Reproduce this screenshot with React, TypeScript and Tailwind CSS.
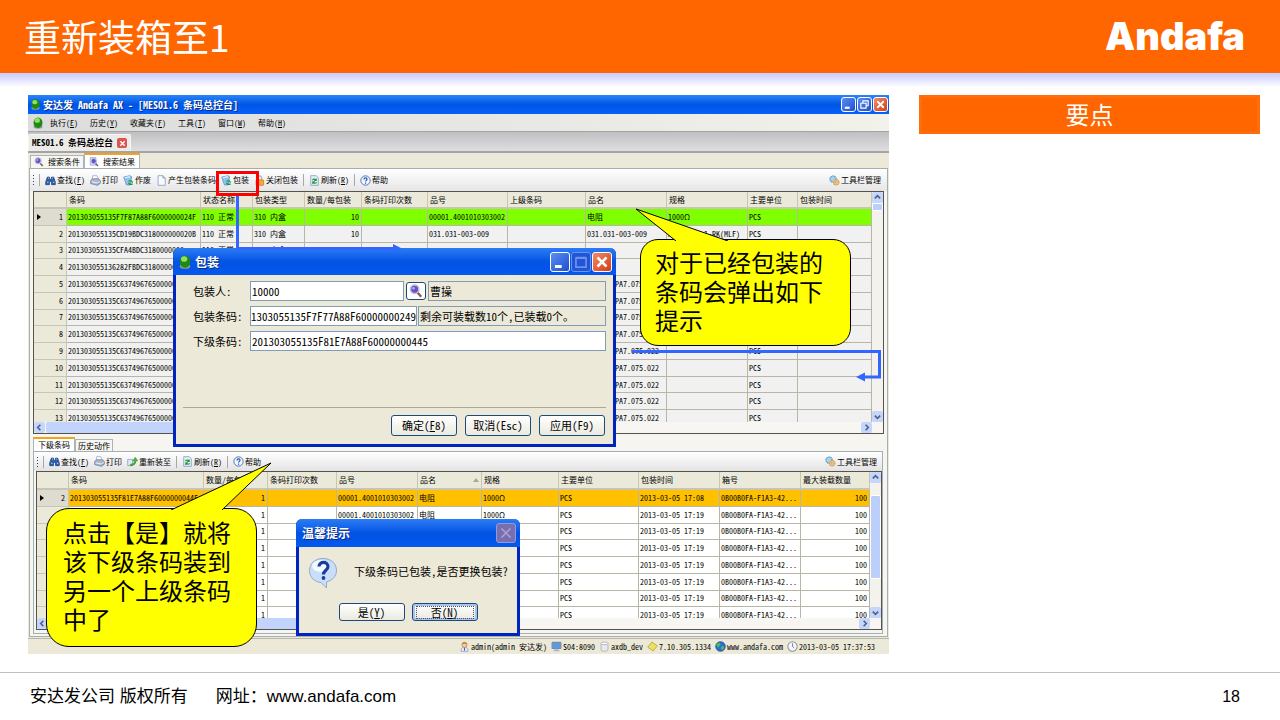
import React from "react";

type IconName =
  | "orb" | "search" | "result" | "find" | "print" | "recycle" | "page" | "lock"
  | "refresh" | "help" | "gears" | "repack" | "user" | "pc" | "db" | "tag" | "globe" | "clock";

const shapes: Record<IconName, React.ReactNode> = {
  orb: (
    <>
      <ellipse cx="8" cy="13" rx="6" ry="2.6" fill="#8a9a9a" />
      <ellipse cx="8" cy="7.500" rx="6" ry="7" fill="#1f8a12" />
      <ellipse cx="7" cy="4.6" rx="3.6" ry="3.2" fill="#8fe05a" />
    </>
  ),
  search: (
    <>
      <path d="M9.5 9.5l4.5 5" stroke="#8a5a4a" strokeWidth="2.6" />
      <circle cx="6.5" cy="6" r="4.8" fill="#6a4fd0" stroke="#b9bfd8" strokeWidth="1.8" />
      <circle cx="5.2" cy="4.8" r="1.5" fill="#b7a8f2" />
    </>
  ),
  result: (
    <>
      <path d="M2 1h9v12H2z" fill="#dfe7f6" stroke="#7f93bd" />
      <path d="M10.5 10.5l4 4" stroke="#6b5a80" strokeWidth="2.4" />
      <circle cx="7.5" cy="6.5" r="4.2" fill="#6a4fd0" stroke="#b9bfd8" strokeWidth="1.5" />
    </>
  ),
  find: (
    <>
      <path d="M3.5 3h3v3h3V3h3l2.5 7v4H9.500V9.500h-3V14H1v-4z" fill="#2b5fa8" stroke="#16407c" />
      <path d="M3 10.500h2M11.500 10.500h2M4.500 4.500h1M10.500 4.500h1" stroke="#cfe2fb" strokeWidth="1.600" />
    </>
  ),
  print: (
    <>
      <path d="M3 7l1-6h6l3 6z" fill="#fff" stroke="#8b9bb5" />
      <path d="M1 8l3-2.500h8l3 2.500v4l-4 3-10-2.500z" fill="#aeb9cb" stroke="#5f6d87" />
      <path d="M2.500 10l8.500 1.800 3-2.300" stroke="#f2f6fb" strokeWidth="1.300" fill="none" />
      <circle cx="12" cy="13" r="1.200" fill="#4da6e8" />
    </>
  ),
  recycle: (
    <>
      <path d="M1 3l9-2 2.500 1.500-2 12H5z" fill="#8fc4ee" stroke="#4c86bd" />
      <path d="M2.500 4l7.500-1.500" stroke="#e9f5ff" strokeWidth="1.800" />
      <path d="M8 8.500h4l2 2.500M14 13.500H9.500L8 11" fill="none" stroke="#1d9b4b" strokeWidth="2" />
    </>
  ),
  page: <path d="M3 1h7l3.500 3.500V15H3z M10 1v3.500h3.500" fill="#f7fbff" stroke="#6f8db9" />,
  lock: (
    <>
      <path d="M5 8V4.500a3 3 0 016 0V8" fill="none" stroke="#b9b9b9" strokeWidth="2" />
      <rect x="3" y="7" width="11" height="8" rx="1" fill="#f4a83a" stroke="#bd7417" />
    </>
  ),
  refresh: (
    <>
      <path d="M2.500 1h8l3 3v11h-11z" fill="#e6effa" stroke="#6f8db9" />
      <path d="M5 7.500c1-2 4-2 5 0M10.500 5v3h-3M11 10.500c-1 2-4 2-5 0M5.500 13v-3h3" fill="none" stroke="#1c9a30" strokeWidth="1.500" />
    </>
  ),
  help: (
    <>
      <circle cx="8" cy="8" r="6.800" fill="#f2f7ff" stroke="#3f6cb8" strokeWidth="1.300" />
      <path d="M5.800 6.400c0-3 4.500-2.800 4.500-.2 0 1.600-2.200 1.700-2.200 3.400M8.100 11v1.600" fill="none" stroke="#2453a8" strokeWidth="1.700" />
    </>
  ),
  gears: (
    <>
      <circle cx="6" cy="6" r="4.500" fill="#a9d3f0" stroke="#5fa0cf" strokeWidth="2" strokeDasharray="2 .8" />
      <circle cx="10.500" cy="10.500" r="4" fill="#f1d49b" stroke="#cf9c45" strokeWidth="1.800" strokeDasharray="2 .7" />
      <circle cx="10.500" cy="10.500" r="1.500" fill="#fff" stroke="#b4822f" />
    </>
  ),
  repack: (
    <>
      <path d="M1 5h7v9H1z" fill="#dce8f7" stroke="#7a93ba" />
      <path d="M5 12c4 0 6-2 6-5H8.500L12 2l3.500 5H13c0 5-3 7-8 7z" fill="#49bd2f" stroke="#247e14" strokeWidth=".8" />
    </>
  ),
  user: (
    <>
      <path d="M3 15c0-5 2-6 5-6s5 1 5 6z" fill="#e8edf6" stroke="#7f93bd" />
      <circle cx="8" cy="5.500" r="3.700" fill="#f6cf9f" stroke="#b57a35" />
      <path d="M4.300 5c0-4 7.400-4 7.400 0-2-1.500-5-1.500-7.400 0z" fill="#c9762a" />
      <path d="M8 10v4" stroke="#3a5fd0" strokeWidth="1.600" />
    </>
  ),
  pc: (
    <>
      <rect x="1.500" y="2" width="13" height="9" rx="1" fill="#5d9be0" stroke="#7a8ca8" strokeWidth="1.500" />
      <path d="M5 12h6l2 3H3z" fill="#a9b7cc" />
    </>
  ),
  db: (
    <>
      <path d="M3 3v10c0 2.500 10 2.500 10 0V3z" fill="#e9e9ee" stroke="#a0a0aa" />
      <ellipse cx="8" cy="3.500" rx="5" ry="2" fill="#fff" stroke="#a0a0aa" />
    </>
  ),
  tag: <path d="M7 1.500L15 7l-6 7.500L1 9z" fill="#eae25c" stroke="#a79c21" />,
  globe: (
    <>
      <circle cx="8" cy="8" r="7" fill="#2a6fd0" stroke="#1c4688" />
      <path d="M3 4c3-2 5-1 5 1s-3 2-3 4-3-1-3-5zM9 8c3-1 5 0 4 2s-3 4-4 2 0-2 0-4z" fill="#4fbf55" />
    </>
  ),
  clock: (
    <>
      <circle cx="8" cy="8" r="6.800" fill="#f4f6fa" stroke="#8d93a3" strokeWidth="1.500" />
      <path d="M8 3.500V8l2.500 2" fill="none" stroke="#5d6a86" strokeWidth="1.200" />
    </>
  ),
};

function Icon({ name, className = "size-[11px]" }: { name: IconName; className?: string }) {
  return (
    <svg viewBox="0 0 16 16" className={`shrink-0 ${className}`} aria-hidden="true">
      {shapes[name]}
    </svg>
  );
}

function Label({ text, hotkey }: { text: string; hotkey?: string }) {
  return (
    <span>
      {text}
      {hotkey && <>(<u>{hotkey}</u>)</>}
    </span>
  );
}

function Tool({ icon, text, hotkey }: { icon: IconName; text: string; hotkey?: string }) {
  return (
    <button type="button" className="flex items-center gap-px whitespace-nowrap">
      <Icon name={icon} />
      <Label text={text} hotkey={hotkey} />
    </button>
  );
}

const Sep = () => <span className="h-3 w-px bg-[#a8a8a8]" />;

const Grip = () => (
  <span className="flex flex-col gap-[2px]">
    {[0, 1, 2, 3].map((i) => (
      <span key={i} className="size-px bg-[#33415f]" />
    ))}
  </span>
);

type Column = { title: string; width: string; right?: boolean; sorted?: boolean };

const upperColumns: Column[] = [
  { title: "条码", width: "w-[134px]" },
  { title: "状态名称", width: "w-[52px]" },
  { title: "包装类型", width: "w-[52px]" },
  { title: "数量/每包装", width: "w-[57px]", right: true },
  { title: "条码打印次数", width: "w-[66px]" },
  { title: "品号", width: "w-[80px]" },
  { title: "上级条码", width: "w-[78px]" },
  { title: "品名", width: "w-[81px]" },
  { title: "规格", width: "w-[81px]" },
  { title: "主要单位", width: "w-[50px]" },
  { title: "包装时间", width: "w-auto" },
];

const part = ["201303055135C6374967650000000", "110 正常", "310 内盒", "10", "", "031.075-022", "", "031.01-PA7.075.022", "", "PCS", ""];

const upperRows: string[][] = [
  ["201303055135F7F87A88F6000000024F", "110 正常", "310 内盒", "10", "", "00001.4001010303002", "", "电阻", "1000Ω", "PCS", ""],
  ["201303055135CD19BDC318000000020B", "110 正常", "310 内盒", "10", "", "031.031-003-009", "", "031.031-003-009", "RC0603FR-1-RK(MLF)", "PCS", ""],
  ["201303055135CFA4BDC3180000000", "110 正常", "310 内盒", "10", "", "", "", "", "", "PCS", ""],
  ["201303055136282FBDC3180000000", "110 正常", "310 内盒", "10", "", "", "", "", "", "PCS", ""],
  ...Array.from({ length: 9 }, () => part),
];

const lowerColumns: Column[] = [
  { title: "条码", width: "w-[135px]" },
  { title: "数量/每包装", width: "w-[64px]", right: true },
  { title: "条码打印次数", width: "w-[69px]" },
  { title: "品号", width: "w-[81px]" },
  { title: "品名", width: "w-[64px]", sorted: true },
  { title: "规格", width: "w-[77px]" },
  { title: "主要单位", width: "w-[80px]" },
  { title: "包装时间", width: "w-[81px]" },
  { title: "箱号", width: "w-[81px]" },
  { title: "最大装载数量", width: "w-auto", right: true },
];

const lowerRows: string[][] = Array.from({ length: 8 }, (_, i) => [
  i === 0 ? "201303055135F81E7A88F60000000445" : "",
  "1", "", "00001.4001010303002", "电阻", "1000Ω", "PCS",
  i === 0 ? "2013-03-05 17:08" : "2013-03-05 17:19",
  "0B00B0FA-F1A3-42...", "100",
]);

function DataGrid(props: {
  columns: Column[];
  rows: string[][];
  numbers: (n: number) => string;
  gutter: string;
  height: string;
  headHeight: string;
  active: string;
  plain: string;
}) {
  const { columns, rows, numbers, gutter, height, headHeight, active, plain } = props;
  return (
    <table className={`w-full table-fixed border-separate border-spacing-0 leading-[10px] ${height}`}>
      <colgroup>
        <col className={gutter} />
        {columns.map((c) => (
          <col key={c.title} className={c.width} />
        ))}
      </colgroup>
      <thead>
        <tr className={`bg-[#ebe9da] ${headHeight}`}>
          <th className="border-r border-b-2 border-[#c9c5b4]" />
          {columns.map((c) => (
            <th key={c.title} className="overflow-hidden border-r border-b-2 border-[#c9c5b4] px-[2px] text-left font-normal whitespace-nowrap">
              <span className="flex items-center justify-between">
                {c.title}
                {c.sorted && (
                  <svg viewBox="0 0 6 4" className="h-1 w-[6px]" aria-hidden="true">
                    <path d="M3 0l3 4H0z" fill="#aca899" />
                  </svg>
                )}
              </span>
            </th>
          ))}
        </tr>
      </thead>
      <tbody>
        {rows.map((row, r) => (
          <tr key={r} className={r === 0 ? active : plain}>
            <th scope="row" className={`border-r border-b border-[#c9c5b4] pr-[3px] text-right font-normal ${r === 0 ? "bg-[#dedcd0]" : "bg-[#ebe9da]"}`}>
              <span className="flex items-center justify-between pl-[3px]">
                <svg viewBox="0 0 4 6" className="h-[6px] w-1" aria-hidden="true">
                  {r === 0 && <path d="M0 0l4 3-4 3z" fill="#000" />}
                </svg>
                {numbers(r)}
              </span>
            </th>
            {row.map((cell, c) => (
              <td key={c} className={`overflow-hidden border-r border-b border-[#b9b6a8] pl-px whitespace-nowrap ${columns[c].right ? "pr-[2px] text-right" : ""}`}>
                {cell}
              </td>
            ))}
          </tr>
        ))}
      </tbody>
    </table>
  );
}

const arrows = { up: "M2 6l3-3 3 3", down: "M2 4l3 3 3-3", left: "M6 2L3 5l3 3", right: "M4 2l3 3-3 3" };

function ScrollButton({ dir }: { dir: keyof typeof arrows }) {
  return (
    <button type="button" aria-label={dir} className="flex size-[11px] shrink-0 items-center justify-center rounded-xs bg-[#c5d5fc]">
      <svg viewBox="0 0 10 10" className="size-[9px]" aria-hidden="true">
        <path d={arrows[dir]} fill="none" stroke="#4d6185" strokeWidth="1.8" />
      </svg>
    </button>
  );
}

function Scrollable({ children, height, thumb, htrack }: { children: React.ReactNode; height: string; thumb: string; htrack: string }) {
  return (
    <div className="border border-[#55534c] bg-[#f7f6f2]">
      <div className={`flex ${height}`}>
        <div className="min-w-0 flex-1 overflow-hidden">{children}</div>
        <div className="flex w-[11px] flex-col bg-[#f3f2ec]">
          <ScrollButton dir="up" />
          <div className="flex flex-1 flex-col">
            <div className={`rounded-xs border border-white bg-[#bccffb] ${thumb}`} />
          </div>
          <ScrollButton dir="down" />
        </div>
      </div>
      <div className="flex h-[11px] pr-[11px]">
        <ScrollButton dir="left" />
        <div className="flex-1 pl-px">
          <div className={`h-full rounded-xs bg-[#c2d3fc] ${htrack}`} />
        </div>
        <ScrollButton dir="right" />
      </div>
    </div>
  );
}

function Caption({ kind, size, muted }: { kind: "min" | "max" | "restore" | "close"; size: string; muted?: boolean }) {
  const close = kind === "close";
  const tone = muted
    ? close ? "bg-[#7a6fae] border-[#8f9be0] text-[#a9a3d8]" : "bg-[#1f55d8] border-[#6f93ea] text-[#6f93ea]"
    : close ? "bg-linear-to-br from-[#f08a64] to-[#d23a10] border-white text-white" : "bg-linear-to-br from-[#5d8cf2] to-[#1c4ed2] border-white text-white";
  return (
    <button type="button" aria-label={kind} className={`flex items-center justify-center rounded-[3px] border ${tone} ${size}`}>
      <svg viewBox="0 0 16 16" className="size-full" fill="none" stroke="currentColor" strokeWidth="2" aria-hidden="true">
        {kind === "min" && <path d="M3.500 12h6" strokeWidth="2.600" />}
        {kind === "max" && <path d="M3.500 4.500h9v8h-9zM3.500 4h9" strokeWidth="1.500" />}
        {kind === "restore" && <path d="M6 6V3.500h6.500v6H10M3.500 6.500H10v6H3.500z" strokeWidth="1.400" />}
        {close && <path d="M4 4l8 8M12 4l-8 8" strokeWidth={muted ? "1.400" : "2.200"} />}
      </svg>
    </button>
  );
}

function DialogButton({ children, focused, height }: { children: React.ReactNode; focused?: boolean; height: string }) {
  return (
    <button
      type="button"
      className={`flex w-[66px] items-center justify-center rounded-[3px] border border-[#1d4a7d] bg-linear-to-b from-white to-[#ebeae0] leading-none ${height} ${focused ? "inset-ring-2 inset-ring-[#a9c3ee]" : ""}`}
    >
      {focused ? <span className="flex h-[13px] w-[58px] items-center justify-center border border-dotted border-[#555]">{children}</span> : children}
    </button>
  );
}

const field = "h-5 min-w-0 border border-[#7f9db9] leading-[18px] outline-none";

function PackDialog() {
  return (
    <section className="absolute top-[153px] left-[145px] flex w-[443px] flex-col rounded-t-md border-3 border-t-0 border-[#0024c0] bg-[#ece9d8] text-[11px]">
      <header className="-mx-[3px] flex h-[27px] items-center rounded-t-md bg-linear-to-b from-[#2c7cf5] via-[#0353e4] to-[#0358ee] pr-1 pl-[5px] text-white">
        <Icon name="orb" className="size-[14px]" />
        <h2 className="flex-1 pl-[3px] text-[12px] font-bold [text-shadow:1px_1px_#0a2a80]">包装</h2>
        <div className="flex gap-px">
          <Caption kind="min" size="size-5" />
          <Caption kind="max" size="size-5" muted />
          <Caption kind="close" size="size-5" />
        </div>
      </header>
      <div className="grid grid-cols-[57px_1fr] items-center gap-y-[5px] pt-[6px] pr-[7px] pl-[17px] leading-4">
        <label htmlFor="packer">包装人:</label>
        <div className="flex gap-[2px]">
          <input id="packer" defaultValue="10000" className={`${field} w-[154px] bg-white px-px`} />
          <button type="button" aria-label="查询" className="flex h-[18px] w-5 shrink-0 items-center justify-center self-center rounded-[3px] border border-[#1d4a7d] bg-white">
            <Icon name="search" className="size-[14px]" />
          </button>
          <output className={`${field} flex-1 px-px`}>曹操</output>
        </div>
        <label htmlFor="packcode">包装条码:</label>
        <div className="flex gap-px">
          <input id="packcode" defaultValue="1303055135F7F77A88F60000000249" className={`${field} w-[167px] bg-white`} />
          <output className={`${field} flex-1 px-px whitespace-nowrap`}>剩余可装载数10个,已装载0个。</output>
        </div>
        <label htmlFor="subcode">下级条码:</label>
        <input id="subcode" defaultValue="201303055135F81E7A88F60000000445" className={`${field} w-full bg-white px-px`} />
      </div>
      <hr className="mx-[7px] mt-[56px] border-t border-[#aca899]" />
      <footer className="flex justify-end gap-2 pt-[7px] pr-2 pb-2">
        <DialogButton height="h-[21px]">确定(<u>F</u>8)</DialogButton>
        <DialogButton height="h-[21px]">取消(Esc)</DialogButton>
        <DialogButton height="h-[21px]">应用(F9)</DialogButton>
      </footer>
    </section>
  );
}

function ConfirmDialog() {
  return (
    <section className="absolute top-[424px] left-[268px] flex w-[224px] flex-col rounded-t-md border-3 border-t-0 border-[#0024c0] bg-[#ece9d8] text-[11px]">
      <header className="-mx-[3px] flex h-7 items-center justify-between rounded-t-md bg-linear-to-b from-[#2c7cf5] via-[#0353e4] to-[#0358ee] pr-1 pl-[6px]">
        <h2 className="text-[12px] font-bold text-white [text-shadow:1px_1px_#0a2a80]">温馨提示</h2>
        <Caption kind="close" size="size-5" muted />
      </header>
      <div className="flex items-start gap-4 pt-[10px] pl-[9px]">
        <svg viewBox="0 0 30 32" className="h-8 w-[30px]" aria-hidden="true">
          <path d="M15 1.500C7 1.500 1.500 6.500 1.500 13.500S7 25 13 25.500L18.500 31V25C24.500 23.500 28.500 19 28.500 13.500 28.500 6.500 23 1.500 15 1.500z" fill="#c9dff9" stroke="#93a9c8" />
          <ellipse cx="13" cy="9" rx="9" ry="6" fill="#f4faff" />
          <path d="M11 9.500c0-5.500 9-5.500 9 0 0 4-4.500 3.500-4.500 8" fill="none" stroke="#173f9c" strokeWidth="3.200" />
          <circle cx="15.500" cy="21" r="1.900" fill="#173f9c" />
        </svg>
        <p className="pt-[6px] leading-4 whitespace-nowrap">下级条码已包装,是否更换包装?</p>
      </div>
      <footer className="flex justify-center gap-[7px] pt-[14px] pb-3">
        <DialogButton height="h-[18px]">是(<u>Y</u>)</DialogButton>
        <DialogButton height="h-[18px]" focused>否(<u>N</u>)</DialogButton>
      </footer>
    </section>
  );
}

function Workbench() {
  return (
    <div className="bg-[#ece9d8] text-[8px] leading-[10px] text-black">
      <header className="flex h-[19px] items-center bg-linear-to-b from-[#2a86f8] via-[#0055e5] to-[#0560fb] px-px pl-[2px] text-white">
        <Icon name="orb" />
        <h2 className="flex-1 pl-[2px] text-[10px] font-bold [text-shadow:1px_1px_#0a2a80]">安达发 Andafa AX - [MES01.6 条码总控台]</h2>
        <div className="flex gap-px">
          <Caption kind="min" size="size-[15px]" />
          <Caption kind="restore" size="size-[15px]" />
          <Caption kind="close" size="size-[15px]" />
        </div>
      </header>
      <nav className="flex h-[17px] items-center gap-3 bg-linear-to-r from-[#dcdcdc] to-[#f1f2ea] pl-1">
        <Icon name="orb" className="-mr-[6px] size-3" />
        {[["执行", "E"], ["历史", "Y"], ["收藏夹", "F"], ["工具", "T"], ["窗口", "W"], ["帮助", "H"]].map(([t, k]) => (
          <button key={k} type="button"><Label text={t} hotkey={k} /></button>
        ))}
      </nav>
      <div className="flex h-[22px] items-end border-t border-b-2 border-[#a3a3a8] bg-linear-to-b from-[#c0c0c3] to-[#dedee1]">
        <div className="flex h-[17px] items-center gap-1 rounded-t-xs border border-b-0 border-[#f6f6f6] bg-[#ecebe8] px-[3px] text-[9px] font-bold">
          MES01.6 条码总控台
          <button type="button" aria-label="关闭" className="flex size-[10px] items-center justify-center rounded-[2px] bg-[#dc5550]">
            <svg viewBox="0 0 8 8" className="size-[7px]" aria-hidden="true"><path d="M1.500 1.500l5 5M6.500 1.500l-5 5" stroke="#fff" strokeWidth="1.600" /></svg>
          </button>
        </div>
      </div>
      <div className="flex h-[15px] items-end pl-[2px]">
        <button type="button" className="flex h-[13px] items-center gap-1 border border-b-0 border-[#a9b5bd] bg-[#f7f6f1] px-[3px]">
          <Icon name="search" className="size-[10px]" />搜索条件
        </button>
        <button type="button" className="flex h-[15px] items-center gap-1 border border-t-2 border-b-0 border-[#a9b5bd] border-t-[#f5a11a] bg-white px-1">
          <Icon name="result" className="size-[10px]" />搜索结果
        </button>
      </div>
      <div className="mx-px border border-[#a3afb5] bg-[#f6f5f0] pb-[2px]">
        <div className="flex h-[22px] items-center justify-between bg-linear-to-b from-white to-[#e6e6e6] pr-[6px] pl-[3px]">
          <div className="flex items-center gap-[5px]">
            <Grip />
            <Sep />
            <Tool icon="find" text="查找" hotkey="F" />
            <Tool icon="print" text="打印" />
            <Tool icon="recycle" text="作废" />
            <Tool icon="page" text="产生包装条码" />
            <Tool icon="recycle" text="包装" />
            <Tool icon="lock" text="关闭包装" />
            <Sep />
            <Tool icon="refresh" text="刷新" hotkey="R" />
            <Sep />
            <Tool icon="help" text="帮助" />
          </div>
          <Tool icon="gears" text="工具栏管理" />
        </div>
        <div className="mx-[3px]">
          <Scrollable height="h-[230px]" thumb="h-2" htrack="w-2/3">
            <DataGrid
              columns={upperColumns}
              rows={upperRows}
              numbers={(n) => String(n + 1)}
              gutter="w-[33px]"
              height="h-[235px]"
              headHeight="h-[17px]"
              active="bg-[#80ff00]"
              plain="bg-[#f1f1f1]"
            />
          </Scrollable>
        </div>
        <div className="flex h-[17px] items-end pl-[3px]">
          <button type="button" className="flex h-[14px] items-center border border-t-2 border-b-0 border-[#a9b5bd] border-t-[#f5a11a] bg-white px-1">下级条码</button>
          <button type="button" className="flex h-3 items-center border border-b-0 border-[#a9b5bd] bg-[#f7f6f1] px-[2px]">历史动作</button>
        </div>
        <div className="mr-1 ml-[3px] border border-[#a3afb5] bg-[#f6f5f0] pb-[3px]">
          <div className="flex h-[19px] items-center justify-between bg-linear-to-b from-white to-[#e3e3e3] pr-[5px] pl-[3px]">
            <div className="flex items-center gap-[5px]">
              <Grip />
              <Sep />
              <Tool icon="find" text="查找" hotkey="F" />
              <Tool icon="print" text="打印" />
              <Tool icon="repack" text="重新装至" />
              <Sep />
              <Tool icon="refresh" text="刷新" hotkey="R" />
              <Sep />
              <Tool icon="help" text="帮助" />
            </div>
            <Tool icon="gears" text="工具栏管理" />
          </div>
          <div className="ml-[2px]">
            <Scrollable height="h-[146px]" thumb="mt-3 h-[84px]" htrack="w-1/2">
              <DataGrid
                columns={lowerColumns}
                rows={lowerRows}
                numbers={(n) => (n === 0 ? "2" : "")}
                gutter="w-[32px]"
                height="h-[152px]"
                headHeight="h-[18px]"
                active="bg-[#ffc000]"
                plain="bg-white"
              />
            </Scrollable>
          </div>
        </div>
      </div>
      <footer className="mt-px flex h-4 items-center justify-end gap-1 border-t border-[#b9b6a8] pr-[14px] whitespace-nowrap">
        {([
          ["user", "admin(admin 安达发)"],
          ["pc", "S04:8090"],
          ["db", "axdb_dev"],
          ["tag", "7.10.305.1334"],
          ["globe", "www.andafa.com"],
          ["clock", "2013-03-05 17:37:53"],
        ] as [IconName, string][]).map(([icon, text]) => (
          <span key={icon} className="flex items-center gap-px"><Icon name={icon} />{text}</span>
        ))}
      </footer>
    </div>
  );
}

const bubble = "absolute w-[211px] border border-black bg-[#ffff00] text-[24px] leading-[29px] text-black";

function Annotations() {
  return (
    <>
      <div className="absolute top-[76px] left-[188px] h-[25px] w-[43px] border-3 border-[#ff0000]" />
      <svg viewBox="0 0 861 560" className="pointer-events-none absolute top-0 left-0 h-[560px] w-[861px]" aria-hidden="true">
        <path d="M209.500 101v52.500H366" fill="none" stroke="#3366ff" strokeWidth="3" />
        <path d="M365 149l9 4.500-9 4z" fill="#3366ff" />
        <path d="M604 256.500h247.500V282H836" fill="none" stroke="#3366ff" strokeWidth="3" />
        <path d="M837 277.500l-9 4.500 9 4.500z" fill="#3366ff" />
      </svg>
      <div className={`${bubble} top-[144px] left-[612px] rounded-[18px] pt-[7px] pr-4 pb-[11px] pl-[14px]`}>
        对于已经包装的条码会弹出如下提示
        <svg viewBox="0 0 100 34" className="absolute -top-[33px] -left-[6px] h-[34px] w-[100px]" aria-hidden="true">
          <path d="M41 34L1 2l92 32" fill="#ffff00" stroke="#000" />
        </svg>
      </div>
      <div className={`${bubble} top-[413px] left-[18px] rounded-[23px] pt-2 pr-5 pb-[13px] pl-4`}>
        点击【是】就将该下级条码装到另一个上级条码中了
        <svg viewBox="0 0 104 48" className="absolute -top-[47px] left-[122px] h-12 w-[104px]" aria-hidden="true">
          <path d="M2 48L102 1 53 48" fill="#ffff00" stroke="#000" />
        </svg>
      </div>
    </>
  );
}

export default function App() {
  return (
    <div className="flex min-h-screen flex-col bg-white [font-family:'Noto_Sans_CJK_SC',sans-serif]">
      <header className="flex h-[73px] items-center justify-between bg-[#ff6600] pr-[35px] pb-[2px] pl-6 text-white">
        <h1 className="text-[37px] leading-[48px]">重新装箱至1</h1>
        <span className="text-[38px] leading-[48px] font-black [font-family:Inter,sans-serif]">Andafa</span>
      </header>
      <div className="h-[14px] bg-linear-to-b from-[#c8c8ff] to-white" />
      <main className="grid flex-1 grid-cols-[minmax(0,861fr)_minmax(0,341fr)] items-start gap-[30px] pt-2 pr-5 pl-7">
        <div className="relative [font-family:'Noto_Sans_Mono_CJK_SC','Noto_Sans_CJK_SC',monospace]">
          <Workbench />
          <PackDialog />
          <ConfirmDialog />
          <Annotations />
        </div>
        <aside>
          <h2 className="flex h-[39px] items-center justify-center bg-[#ff6600] pb-[2px] text-[24px] leading-8 text-white inset-ring-3 inset-ring-[#ff6d0c]">要点</h2>
        </aside>
      </main>
      <footer className="flex h-12 items-center justify-between border-t border-[#c0c0c0] pr-10 pl-[30px] text-[17px] text-black [font-family:'Liberation_Sans','Noto_Sans_CJK_SC',sans-serif]">
        <p className="flex gap-7">
          <span>安达发公司 版权所有</span>
          <span>网址：<a href="http://www.andafa.com">www.andafa.com</a></span>
        </p>
        <span className="text-[16px]">18</span>
      </footer>
    </div>
  );
}
